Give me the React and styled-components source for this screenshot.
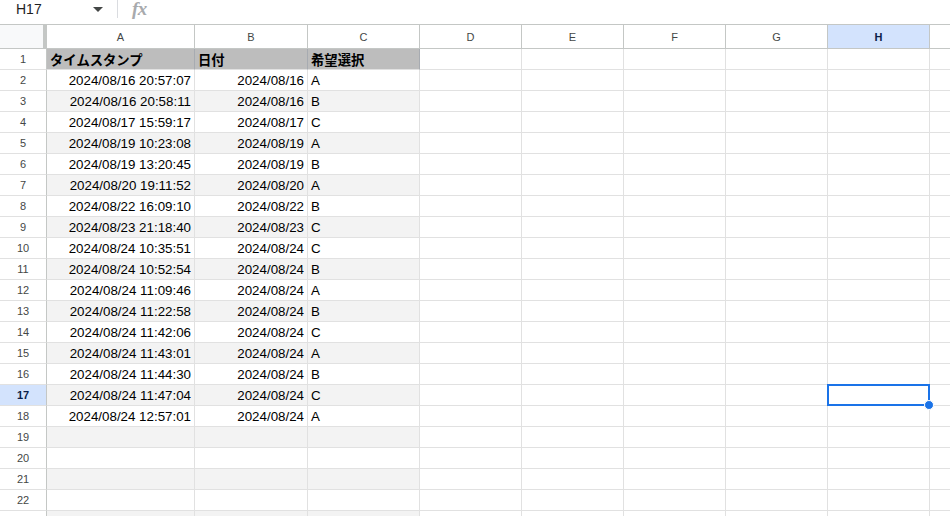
import React from "react";
import styled, { createGlobalStyle } from "styled-components";

const GlobalStyle = createGlobalStyle`
  html, body {
    margin: 0;
    padding: 0;
    background: #fff;
    overflow: hidden;
  }
  body {
    font-family: "Liberation Sans", Arial, "Noto Sans CJK JP", sans-serif;
  }
`;

const Page = styled.div`
  width: 950px;
  height: 516px;
  overflow: hidden;
  display: flex;
  flex-direction: column;
`;

const FormulaBar = styled.div`
  height: 24px;
  border-bottom: 1px solid #c4c7c5;
  display: flex;
  align-items: flex-start;
  flex-shrink: 0;
`;

const NameBox = styled.div`
  width: 118px;
  height: 18px;
  display: flex;
  align-items: center;
  justify-content: space-between;
  padding: 0 14px 0 16px;
  box-sizing: border-box;
  font-size: 14px;
  color: #1f1f1f;
  border-right: 1px solid #dadce0;
`;

const Caret = styled.span`
  width: 0;
  height: 0;
  border-left: 5px solid transparent;
  border-right: 5px solid transparent;
  border-top: 5px solid #444746;
`;

const Fx = styled.span`
  margin-left: 14px;
  font-family: "Liberation Serif", "Times New Roman", serif;
  font-style: italic;
  font-weight: bold;
  font-size: 19px;
  line-height: 18px;
  color: #a8aaad;
  letter-spacing: -0.5px;
`;

const Sheet = styled.div`
  display: grid;
  grid-template-columns: 47px 148px 113px 112px repeat(6, 102px);
  grid-auto-rows: 21px;
  grid-template-rows: 24px;
`;

const Corner = styled.div`
  background: #f8f9fa;
  border-right: 4px solid #c4c7c5;
  border-bottom: 1px solid #c4c7c5;
  box-sizing: border-box;
`;

const ColHead = styled.div`
  box-sizing: border-box;
  border-right: 1px solid #c4c7c5;
  border-bottom: 1px solid #c4c7c5;
  background: ${(p) => (p.$active ? "#d3e3fd" : "#fff")};
  color: ${(p) => (p.$active ? "#0b1e49" : "#444746")};
  font-weight: ${(p) => (p.$active ? "bold" : "normal")};
  font-size: 11px;
  display: flex;
  align-items: center;
  justify-content: center;
`;

const RowHead = styled.div`
  box-sizing: border-box;
  border-right: 1px solid #c4c7c5;
  border-bottom: 1px solid #e1e1e1;
  background: ${(p) => (p.$active ? "#d3e3fd" : "#fff")};
  color: ${(p) => (p.$active ? "#0b1e49" : "#444746")};
  font-weight: ${(p) => (p.$active ? "bold" : "normal")};
  font-size: 11px;
  display: flex;
  align-items: center;
  justify-content: center;
`;

const Cell = styled.div`
  position: relative;
  box-sizing: border-box;
  border-right: 1px solid ${(p) => (p.$head ? "#a7abb1" : "#e1e1e1")};
  border-bottom: 1px solid #e1e1e1;
  background: ${(p) => (p.$head ? "#bdbdbd" : p.$band ? "#f3f3f3" : "#fff")};
  font-size: 13.33px;
  font-weight: ${(p) => (p.$head ? "bold" : "normal")};
  color: #000;
  display: flex;
  align-items: center;
  justify-content: ${(p) => (p.$right ? "flex-end" : "flex-start")};
  padding: 0 3px;
  white-space: nowrap;
`;

const Selection = styled.div`
  position: absolute;
  top: -1px;
  left: -1px;
  right: -1px;
  bottom: -1px;
  border: 2px solid #1a73e8;
  pointer-events: none;
  z-index: 2;
`;

const Handle = styled.span`
  position: absolute;
  right: -6px;
  bottom: -6px;
  width: 10px;
  height: 10px;
  border-radius: 50%;
  background: #1a73e8;
  border: 1px solid #fff;
  box-sizing: border-box;
`;

const columns = ["A", "B", "C", "D", "E", "F", "G", "H", "I"];

const records = [
  ["2024/08/16 20:57:07", "2024/08/16", "A"],
  ["2024/08/16 20:58:11", "2024/08/16", "B"],
  ["2024/08/17 15:59:17", "2024/08/17", "C"],
  ["2024/08/19 10:23:08", "2024/08/19", "A"],
  ["2024/08/19 13:20:45", "2024/08/19", "B"],
  ["2024/08/20 19:11:52", "2024/08/20", "A"],
  ["2024/08/22 16:09:10", "2024/08/22", "B"],
  ["2024/08/23 21:18:40", "2024/08/23", "C"],
  ["2024/08/24 10:35:51", "2024/08/24", "C"],
  ["2024/08/24 10:52:54", "2024/08/24", "B"],
  ["2024/08/24 11:09:46", "2024/08/24", "A"],
  ["2024/08/24 11:22:58", "2024/08/24", "B"],
  ["2024/08/24 11:42:06", "2024/08/24", "C"],
  ["2024/08/24 11:43:01", "2024/08/24", "A"],
  ["2024/08/24 11:44:30", "2024/08/24", "B"],
  ["2024/08/24 11:47:04", "2024/08/24", "C"],
  ["2024/08/24 12:57:01", "2024/08/24", "A"],
];

const headers = ["タイムスタンプ", "日付", "希望選択"];
const activeCol = 7;
const activeRow = 17;

export default function App() {
  const rows = [];
  for (let r = 1; r <= 22; r++) {
    const data = r === 1 ? headers : records[r - 2] || ["", "", ""];
    rows.push(
      <React.Fragment key={r}>
        <RowHead $active={r === activeRow}>{r}</RowHead>
        {columns.map((c, i) => {
          const inTable = i < 3;
          return (
            <Cell
              key={c}
              $head={r === 1 && inTable}
              $band={inTable && r % 2 === 1 && r > 1}
              $right={r > 1 && i < 2}
            >
              {inTable ? data[i] : ""}
              {r === activeRow && i === activeCol && (
                <Selection>
                  <Handle />
                </Selection>
              )}
            </Cell>
          );
        })}
      </React.Fragment>
    );
  }

  return (
    <>
      <GlobalStyle />
      <Page>
        <FormulaBar>
          <NameBox>
            H17
            <Caret />
          </NameBox>
          <Fx>fx</Fx>
        </FormulaBar>
        <Sheet>
          <Corner />
          {columns.map((c, i) => (
            <ColHead key={c} $active={i === activeCol}>
              {c}
            </ColHead>
          ))}
          {rows}
          <RowHead />
          {columns.map((c, i) => (
            <Cell key={c} $band={i < 3} />
          ))}
        </Sheet>
      </Page>
    </>
  );
}
